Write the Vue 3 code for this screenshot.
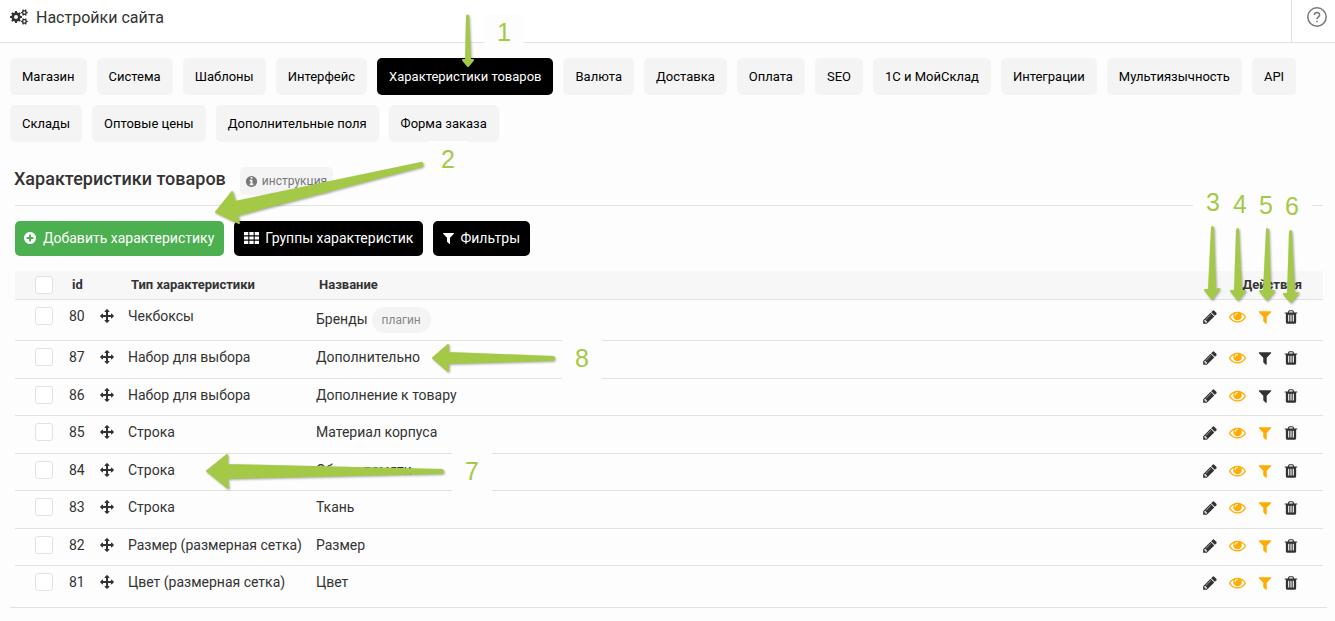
<script setup>
const tabs = [
  'Магазин', 'Система', 'Шаблоны', 'Интерфейс', 'Характеристики товаров', 'Валюта', 'Доставка',
  'Оплата', 'SEO', '1С и МойСклад', 'Интеграции', 'Мультиязычность', 'API',
  'Склады', 'Оптовые цены', 'Дополнительные поля', 'Форма заказа',
]
const activeTab = 'Характеристики товаров'

const rows = [
  { id: 80, type: 'Чекбоксы', name: 'Бренды', plugin: true, filter: true },
  { id: 87, type: 'Набор для выбора', name: 'Дополнительно', filter: false },
  { id: 86, type: 'Набор для выбора', name: 'Дополнение к товару', filter: false },
  { id: 85, type: 'Строка', name: 'Материал корпуса', filter: true },
  { id: 84, type: 'Строка', name: 'Объем памяти', filter: true },
  { id: 83, type: 'Строка', name: 'Ткань', filter: true },
  { id: 82, type: 'Размер (размерная сетка)', name: 'Размер', filter: true },
  { id: 81, type: 'Цвет (размерная сетка)', name: 'Цвет', filter: true },
]

const paths = {
  pencil: 'M491 1536l91-91-235-235-91 91v107h128v128h107zm523-928q0-22-22-22-10 0-17 7l-542 542q-7 7-7 17 0 22 22 22 10 0 17-7l542-542q7-7 7-17zm-54-192l416 416-832 832h-416v-416zm683 96q0 53-37 90l-166 166-416-416 166-165q36-38 90-38 53 0 91 38l235 234q37 39 37 91z',
  eye: 'M1664 960q-152-236-381-353 61 104 61 225 0 185-131.5 316.5t-316.5 131.5-316.5-131.5-131.5-316.5q0-121 61-225-229 117-381 353 133 205 333.5 326.5t434.5 121.5 434.5-121.5 333.5-326.5zm-720-384q0-20-14-34t-34-14q-125 0-214.5 89.5t-89.5 214.5q0 20 14 34t34 14 34-14 14-34q0-86 61-147t147-61q20 0 34-14t14-34zm848 384q0 34-20 69-140 230-376.5 368.5t-499.5 138.5-499.5-139-376.5-368q-20-35-20-69t20-69q140-229 376.5-368t499.5-139 499.5 139 376.5 368q20 35 20 69z',
  filter: 'M1595 295q17 41-14 70l-493 493v742q0 42-39 59-13 5-25 5-27 0-45-19l-256-256q-19-19-19-45v-486l-493-493q-31-29-14-70 17-39 59-39h1280q42 0 59 39z',
  trash: 'M704 1376v-704q0-14-9-23t-23-9h-64q-14 0-23 9t-9 23v704q0 14 9 23t23 9h64q14 0 23-9t9-23zm256 0v-704q0-14-9-23t-23-9h-64q-14 0-23 9t-9 23v704q0 14 9 23t23 9h64q14 0 23-9t9-23zm256 0v-704q0-14-9-23t-23-9h-64q-14 0-23 9t-9 23v704q0 14 9 23t23 9h64q14 0 23-9t9-23zm-544-992h448l-48-117q-7-9-17-11h-317q-10 2-17 11zm928 32v64q0 14-9 23t-23 9h-96v948q0 83-47 143.500t-113 60.500h-832q-66 0-113-58.500t-47-141.500v-952h-96q-14 0-23-9t-9-23v-64q0-14 9-23t23-9h309l70-167q15-37 54-63t79-26h320q40 0 79 26t54 63l70 167h309q14 0 23 9t9 23z',
  move: 'M1792 896q0 26-19 45l-256 256q-19 19-45 19t-45-19-19-45v-128h-384v384h128q26 0 45 19t19 45-19 45l-256 256q-19 19-45 19t-45-19l-256-256q-19-19-19-45t19-45 45-19h128v-384h-384v128q0 26-19 45t-45 19-45-19l-256-256q-19-19-19-45t19-45l256-256q19-19 45-19t45 19 19 45v128h384v-384h-128q-26 0-45-19t-19-45 19-45l256-256q19-19 45-19t45 19l256 256q19 19 19 45t-19 45-45 19h-128v384h384v-128q0-26 19-45t45-19 45 19l256 256q19 19 19 45z',
  plus: 'M1344 960v-128q0-26-19-45t-45-19h-256v-256q0-26-19-45t-45-19h-128q-26 0-45 19t-19 45v256h-256q-26 0-45 19t-19 45v128q0 26 19 45t45 19h256v256q0 26 19 45t45 19h128q26 0 45-19t19-45v-256h256q26 0 45-19t19-45zm320-64q0 209-103 385.500t-279.500 279.500-385.500 103-385.500-103-279.500-279.500-103-385.500 103-385.500 279.500-279.500 385.500-103 385.500 103 279.500 279.500 103 385.500z',
  info: 'M1152 1376v-160q0-14-9-23t-23-9h-96v-512q0-14-9-23t-23-9h-320q-14 0-23 9t-9 23v160q0 14 9 23t23 9h96v320h-96q-14 0-23 9t-9 23v160q0 14 9 23t23 9h448q14 0 23-9t9-23zm-128-896v-160q0-14-9-23t-23-9h-192q-14 0-23 9t-9 23v160q0 14 9 23t23 9h192q14 0 23-9t9-23zm640 416q0 209-103 385.500t-279.500 279.500-385.500 103-385.500-103-279.500-279.500-103-385.500 103-385.500 279.500-279.500 385.500-103 385.500 103 279.500 279.500 103 385.500z',
}

function gear(cx, cy, outer, inner, hole, teeth) {
  const step = (Math.PI * 2) / teeth
  const at = (r, a) => `${(cx + r * Math.cos(a)).toFixed(2)} ${(cy + r * Math.sin(a)).toFixed(2)}`
  const points = []
  for (let i = 0; i < teeth; i++) {
    const a = i * step
    points.push(at(inner, a - step * 0.3), at(outer, a - step * 0.2), at(outer, a + step * 0.2), at(inner, a + step * 0.3))
  }
  return `M${points.join('L')}ZM${cx - hole} ${cy}a${hole} ${hole} 0 1 0 ${hole * 2} 0a${hole} ${hole} 0 1 0 ${-hole * 2} 0Z`
}
const cogs = gear(6, 8, 6, 4.6, 2, 8) + gear(14.4, 3.6, 3.4, 2.5, 1.1, 6) + gear(14.4, 12.4, 3.4, 2.5, 1.1, 6)
</script>

<template>
  <div class="page">
    <header class="topbar">
      <svg class="cogs" viewBox="0 0 18 16" aria-hidden="true"><path :d="cogs" fill-rule="evenodd" /></svg>
      <h1>Настройки сайта</h1>
      <button class="help" type="button" aria-label="Помощь">
        <svg viewBox="0 0 20 20" aria-hidden="true">
          <circle cx="10" cy="10" r="9.200" />
          <path d="M7.400 8.100C7.400 4.600 12.600 4.700 12.600 7.900C12.600 9.800 10 9.900 10 12.200M10 13.700V15.200" />
        </svg>
      </button>
    </header>

    <main>
      <nav class="tabs">
        <a v-for="tab in tabs" :key="tab" href="#" :class="{ active: tab === activeTab }">{{ tab }}</a>
      </nav>

      <section class="panel">
        <div class="heading">
          <h2>Характеристики товаров</h2>
          <a class="guide" href="#">
            <svg viewBox="0 0 1792 1792" aria-hidden="true"><path :d="paths.info" /></svg>
            <span>инструкция</span>
          </a>
        </div>

        <div class="toolbar">
          <button type="button" class="add">
            <svg viewBox="0 0 1792 1792" aria-hidden="true"><path :d="paths.plus" /></svg>
            <span>Добавить характеристику</span>
          </button>
          <button type="button">
            <svg class="grid" viewBox="0 0 14 11" aria-hidden="true">
              <path d="M0 0h4v3h-4zM5 0h4v3h-4zM10 0h4v3h-4zM0 4h4v3h-4zM5 4h4v3h-4zM10 4h4v3h-4zM0 8h4v3h-4zM5 8h4v3h-4zM10 8h4v3h-4z" />
            </svg>
            <span>Группы характеристик</span>
          </button>
          <button type="button">
            <svg class="funnel" viewBox="192 0 1408 1792" aria-hidden="true"><path :d="paths.filter" /></svg>
            <span>Фильтры</span>
          </button>
        </div>

        <table>
          <colgroup>
            <col class="c-check" /><col class="c-id" /><col class="c-move" /><col class="c-type" /><col /><col class="c-actions" />
          </colgroup>
          <thead>
            <tr>
              <th><input type="checkbox" aria-label="Выбрать все" /></th>
              <th class="shift">id</th>
              <th></th>
              <th class="shift">Тип характеристики</th>
              <th class="shift">Название</th>
              <th class="last">Действия</th>
            </tr>
          </thead>
          <tbody>
            <tr v-for="row in rows" :key="row.id">
              <td><input type="checkbox" :aria-label="`Выбрать ${row.id}`" /></td>
              <td>{{ row.id }}</td>
              <td class="move"><svg viewBox="0 0 1792 1792" aria-hidden="true"><path :d="paths.move" /></svg></td>
              <td>{{ row.type }}</td>
              <td :class="{ tagged: row.plugin }">{{ row.name }}<span v-if="row.plugin" class="tag">плагин</span></td>
              <td>
                <div class="actions">
                  <button type="button" aria-label="Изменить"><svg viewBox="0 0 1792 1792"><path :d="paths.pencil" /></svg></button>
                  <button type="button" class="on" aria-label="Видимость"><svg class="eye" viewBox="0 0 1792 1792"><path :d="paths.eye" /></svg></button>
                  <button type="button" :class="{ on: row.filter }" aria-label="Фильтр"><svg viewBox="0 0 1792 1792"><path :d="paths.filter" /></svg></button>
                  <button type="button" aria-label="Удалить"><svg class="bin" viewBox="128 0 1536 1792"><path :d="paths.trash" /></svg></button>
                </div>
              </td>
            </tr>
          </tbody>
        </table>
      </section>
    </main>

    <div class="notes left">
      <span class="note n1">1</span>
      <span class="note n2">2</span>
      <span class="note n7">7</span>
      <span class="note n8">8</span>
      <svg width="620" height="621" viewBox="0 0 620 621" aria-hidden="true">
        <path d="M467 16Q468 15 468 16L470 60L473 60L468 66L463 60L466 60Z" />
        <path d="M421 163Q423 163 422 166L237 215L239 223L216 212L232 192L235 202Z" />
        <path d="M442 470Q444 472 442 473L227 478L228 488L207 471L227 455L227 465Z" />
        <path d="M553 357Q555 358 553 360L448 363L448 371L433 358L448 345L448 353Z" />
      </svg>
    </div>
    <div class="notes right">
      <span class="note n3">3</span>
      <span class="note n4">4</span>
      <span class="note n5">5</span>
      <span class="note n6">6</span>
      <svg width="142" height="320" viewBox="1193 0 142 320" aria-hidden="true">
        <path d="M1212 228Q1212 226 1213 228L1215 290L1219 289L1212 299L1205 290L1209 290Z" />
        <path d="M1237 230Q1238 228 1238 230L1241 291L1245 291L1238 300L1231 291L1235 291Z" />
        <path d="M1267 230Q1267 228 1268 230L1270 291L1274 291L1267 300L1260 291L1264 291Z" />
        <path d="M1290 232Q1291 230 1291 232L1294 294L1298 293L1291 302L1284 294L1288 294Z" />
      </svg>
    </div>
  </div>
</template>

<style>
body { margin: 0; background: #fdfdfd; }
</style>

<style scoped>
* { box-sizing: border-box; }
.page { position: relative; font-family: Roboto, "Liberation Sans", sans-serif; font-size: 14px; color: #333; overflow: hidden; }
button { font: inherit; border: 0; cursor: pointer; }
svg { display: block; fill: currentColor; flex: none; }
a { text-decoration: none; }
.topbar { display: flex; align-items: center; height: 43px; padding-left: 10px; background: #fff; border-bottom: 1px solid #e2e2e2; }
.cogs { width: 18px; height: 16px; margin-bottom: 8px; }
h1 { flex: 1; margin: 0 0 6px 8px; font-size: 16px; line-height: 20px; font-weight: 400; }
.help { display: flex; justify-content: flex-end; width: 44px; height: 42px; padding: 7px 8px 0 0; background: none; border-left: 1px solid #e2e2e2; color: #777; }
.help svg { width: 20px; height: 20px; fill: none; stroke: currentColor; stroke-width: 1.500; }
main { padding: 15px 8px 0 10px; }
.tabs { display: flex; flex-wrap: wrap; gap: 10px; }
.tabs a { padding: 0 12px; border-radius: 5px; background: #f4f4f4; color: #000; font-size: 13px; line-height: 37px; }
.tabs a.active { background: #000; color: #fff; }
.panel { padding: 25px 4px 4px 5px; border-bottom: 1px solid #e2e2e2; }
.heading { display: flex; gap: 14px; align-items: flex-start; height: 39px; border-bottom: 1px solid #e2e2e2; }
h2 { margin: 0 0 0 -1px; font-size: 18px; line-height: 24px; font-weight: 500; }
.guide { display: flex; align-items: center; gap: 4px; height: 28px; padding: 0 6px 0 5px; border-radius: 5px; background: #f4f4f4; color: #777; font-size: 12px; }
.guide svg { width: 13px; height: 13px; }
.toolbar { display: flex; gap: 10px; padding: 15px 0; }
.toolbar button { display: flex; align-items: center; gap: 6px; height: 35px; padding: 0 10px 2px; border-radius: 5px; background: #000; color: #fff; }
.toolbar .add { padding-left: 8px; background: #4caf50; }
.toolbar svg { width: 14px; height: 14px; }
.toolbar .grid { width: 15px; height: 12px; }
.toolbar .funnel { width: 11px; }
table { width: 100%; table-layout: fixed; border-collapse: collapse; }
.c-check { width: 51px; } .c-id { width: 31px; } .c-move { width: 28px; } .c-type { width: 188px; } .c-actions { width: 140px; }
tr { border-bottom: 1px solid #e2e2e2; }
th { height: 28px; padding: 0 3px; background: #f7f7f7; font-size: 13px; font-weight: 700; text-align: left; }
th.shift { padding-left: 6px; }
th.last { padding-right: 21px; text-align: right; }
td { height: 37px; padding: 7px 3px 0; line-height: 18px; vertical-align: top; white-space: nowrap; }
tbody tr:nth-child(even) td { height: 38px; }
tbody tr:last-child { border-bottom: 0; }
td.tagged { height: 41px; }
.tag { display: inline-block; height: 26px; margin-left: 4px; padding: 0 10px; border-radius: 13px; background: #f4f4f4; color: #888; font-size: 12px; line-height: 26px; }
input { appearance: none; display: block; width: 18px; height: 18px; margin: 0 0 0 17px; border: 1px solid #e2e2e2; border-radius: 3px; background: #fff; }
.move svg { width: 14px; height: 14px; margin-top: 2px; }
.actions { display: flex; justify-content: flex-end; align-items: center; gap: 11px; height: 20px; padding-right: 22px; }
.actions button { padding: 0; background: none; color: #333; }
.actions button.on { color: #ffab00; }
.actions svg { width: 16px; height: 16px; }
.actions .eye { width: 17px; height: 17px; }
.actions .bin { width: 14px; }
.notes { position: absolute; top: 0; pointer-events: none; }
.notes svg { fill: #a4c947; stroke: #a4c947; stroke-width: 2; stroke-linejoin: round; filter: drop-shadow(1px 1px 1px #0005); position: relative; }
.left { left: 0; } .right { right: 0; }
.note { position: absolute; width: 40px; height: 39px; background: #fdfdfd; color: #a4c947; font: 25px/36px "Liberation Sans", Arial, sans-serif; text-align: center; }
.n1 { left: 484px; top: 14px; } .n2 { left: 428px; top: 141px; } .n7 { left: 452px; top: 453px; } .n8 { left: 562px; top: 340px; }
.n3 { left: 0; top: 184px; } .n4 { left: 27px; top: 186px; } .n5 { left: 53px; top: 187px; } .n6 { left: 79px; top: 188px; }
</style>
